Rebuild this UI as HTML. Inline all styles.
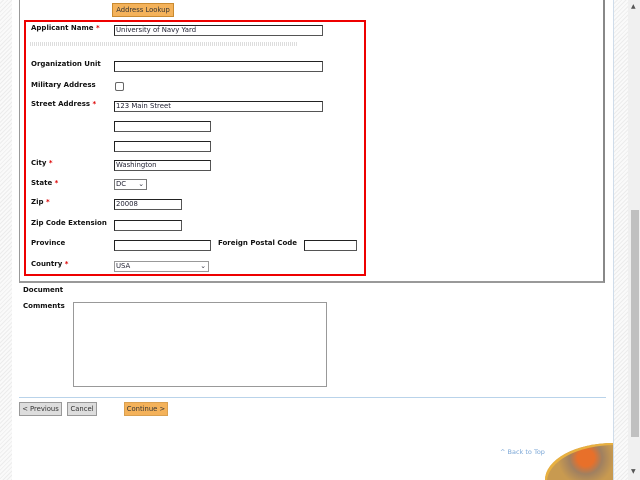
<!DOCTYPE html>
<html style="overflow:hidden;width:640px;height:480px"><head><style>
html,body{margin:0;width:640px;height:480px;overflow:hidden}
body{position:relative;background:#f4f4f4;font-family:"DejaVu Sans",Verdana,sans-serif;font-size:7px;color:#111}
.a{position:absolute}
.lbl{position:absolute;font-weight:bold;font-size:7px;white-space:nowrap}
.req{color:#d00}
.inp{position:absolute;height:9px;border:1px solid #555;border-top:1px solid #222;border-left:1px solid #222;background:#fff;font-size:6.9px;line-height:9px;padding-left:1px;box-sizing:content-box;color:#223;white-space:nowrap;overflow:hidden}
.btn{position:absolute;height:12px;font-size:6.8px;line-height:12px;text-align:center;border:1px solid #999;background:#ddd;color:#333;white-space:nowrap}
</style></head><body>
<div class="a" style="left:0;top:0;width:12px;height:480px;background:repeating-linear-gradient(135deg,#fafafa 0 2px,#ececec 2px 3px)"></div>
<div class="a" style="left:12px;top:0;width:601px;height:480px;background:#fff;border-right:1px solid #cfdcea"></div>
<div class="a" style="left:614px;top:0;width:14px;height:480px;background:repeating-linear-gradient(135deg,#fafafa 0 2px,#ececec 2px 3px)"></div>
<div class="a" style="left:628px;top:0;width:12px;height:480px;background:#f0f0f0"></div>
<div class="a" style="left:631px;top:210px;width:8px;height:227px;background:#c0c0c0"></div>
<div class="a" style="left:631px;top:3px;font-size:6px;color:#555">▲</div>
<div class="a" style="left:631px;top:468px;font-size:6px;color:#555">▼</div>
<div class="a" style="left:19px;top:-2px;width:583px;height:283px;border:1px solid #999;border-top:none;border-right:2px solid #888;border-bottom:2px solid #999"></div>
<div class="btn" style="left:112px;top:3px;width:60px;background:#f4b25a;border-color:#c98a30">Address Lookup</div>
<div class="a" style="left:24px;top:20px;width:338px;height:252px;border:2px solid #e00"></div>
<div class="lbl" style="left:31px;top:24px">Applicant Name <span class="req">*</span></div>
<div class="inp" style="left:114px;top:25px;width:206px">University of Navy Yard</div>
<div class="a" style="left:30px;top:42px;width:268px;height:4px;background:repeating-linear-gradient(90deg,#ddd 0 1px,#fff 1px 2px)"></div>
<div class="lbl" style="left:31px;top:60px">Organization Unit</div>
<div class="inp" style="left:114px;top:61px;width:206px"></div>
<div class="lbl" style="left:31px;top:81px">Military Address</div>
<div class="a" style="left:115px;top:82px;width:7px;height:7px;border:1px solid #666;border-radius:2px"></div>
<div class="lbl" style="left:31px;top:100px">Street Address <span class="req">*</span></div>
<div class="inp" style="left:114px;top:101px;width:206px">123 Main Street</div>
<div class="inp" style="left:114px;top:121px;width:94px"></div>
<div class="inp" style="left:114px;top:141px;width:94px"></div>
<div class="lbl" style="left:31px;top:159px">City <span class="req">*</span></div>
<div class="inp" style="left:114px;top:160px;width:94px">Washington</div>
<div class="lbl" style="left:31px;top:179px">State <span class="req">*</span></div>
<div class="inp" style="left:114px;top:179px;width:30px;border-color:#777">DC <span style="float:right;padding-right:2px">⌄</span></div>
<div class="lbl" style="left:31px;top:198px">Zip <span class="req">*</span></div>
<div class="inp" style="left:114px;top:199px;width:65px">20008</div>
<div class="lbl" style="left:31px;top:219px">Zip Code Extension</div>
<div class="inp" style="left:114px;top:220px;width:65px"></div>
<div class="lbl" style="left:31px;top:239px">Province</div>
<div class="inp" style="left:114px;top:240px;width:94px"></div>
<div class="lbl" style="left:218px;top:239px">Foreign Postal Code</div>
<div class="inp" style="left:304px;top:240px;width:50px"></div>
<div class="lbl" style="left:31px;top:260px">Country <span class="req">*</span></div>
<div class="inp" style="left:114px;top:261px;width:92px;border-color:#999">USA <span style="float:right;padding-right:2px">⌄</span></div>
<div class="lbl" style="left:23px;top:286px">Document</div>
<div class="lbl" style="left:23px;top:302px">Comments</div>
<div class="a" style="left:73px;top:302px;width:252px;height:83px;border:1px solid #999"></div>
<div class="a" style="left:19px;top:397px;width:587px;height:1px;background:#b9d3ea"></div>
<div class="btn" style="left:19px;top:402px;width:41px">&lt; Previous</div>
<div class="btn" style="left:67px;top:402px;width:28px">Cancel</div>
<div class="btn" style="left:124px;top:402px;width:42px;background:#f4b25a;border-color:#d9a050">Continue &gt;</div>
<div class="a" style="left:500px;top:448px;font-size:6.5px;color:#7aa6d6;white-space:nowrap">^ Back to Top</div>
<div class="a" style="left:545px;top:443px;width:68px;height:37px;overflow:hidden;border-top-left-radius:68px 37px;background:radial-gradient(circle at 60% 40%,#e8702a 0 18%,#a08060 35%,#c89a50 60%);box-shadow:inset 2px 2px 0 #e8b040"></div>
</body></html>
